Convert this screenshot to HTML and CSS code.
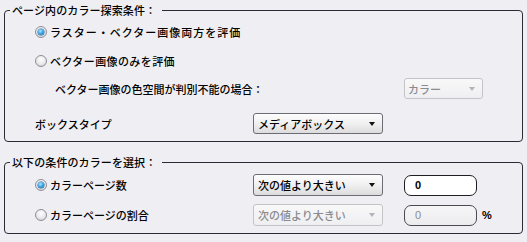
FILE: index.html
```html
<!DOCTYPE html>
<html lang="ja">
<head>
<meta charset="utf-8">
<link rel="stylesheet" href="styles.css">
</head>
<body>
<fieldset class="group group-top">
  <legend>ページ内のカラー探索条件：</legend>
  <div class="row row-1">
    <label class="opt"><span class="radio on"></span><span class="txt wide">ラスター・ベクター画像両方を評価</span></label>
  </div>
  <div class="row row-2">
    <label class="opt"><span class="radio"></span><span class="txt mid">ベクター画像のみを評価</span></label>
  </div>
  <div class="row row-3">
    <span class="txt indent span2">ベクター画像の色空間が判別不能の場合：</span>
    <div class="select small disabled"><span class="sel-text">カラー</span><span class="arrow"></span></div>
  </div>
  <div class="row row-4">
    <span class="txt">ボックスタイプ</span>
    <div class="select"><span class="sel-text">メディアボックス</span><span class="arrow"></span></div>
  </div>
</fieldset>
<fieldset class="group group-bottom">
  <legend>以下の条件のカラーを選択：</legend>
  <div class="row row-5">
    <label class="opt"><span class="radio on"></span><span class="txt">カラーページ数</span></label>
    <div class="select"><span class="sel-text">次の値より大きい</span><span class="arrow"></span></div>
    <div class="field"><span class="input">0</span></div>
  </div>
  <div class="row row-6">
    <label class="opt"><span class="radio"></span><span class="txt">カラーページの割合</span></label>
    <div class="select disabled"><span class="sel-text">次の値より大きい</span><span class="arrow"></span></div>
    <div class="field"><span class="input disabled">0</span><span class="pct">%</span></div>
  </div>
</fieldset>
</body>
</html>
```
FILE: styles.css
```css
html {
  background: #efeef3;
}
body {
  margin: 0;
  width: 527px;
  height: 242px;
  overflow: hidden;
  font-family: "Noto Sans CJK JP", "Noto Sans", sans-serif;
  font-size: 11px;
  font-weight: 500;
  color: #000;
  background: #efeef3;
}
.group {
  margin: 0 0 0 4px;
  width: 519px;
  box-sizing: border-box;
  border: 1px solid #2b2b38;
  border-radius: 4px;
  padding: 0 0 7px 30px;
  min-width: 0;
}
.group-bottom {
  margin-top: 10px;
}
legend {
  margin-left: -25px;
  padding: 0 6px 0 2px;
  line-height: 20px;
  height: 20px;
  font-size: 11px;
  letter-spacing: 0.1px;
}
.row {
  display: grid;
  grid-template-columns: 218px 151px auto;
  align-items: center;
}
.row-1 { height: 22px; margin-top: 1px; }
.row-2 { height: 22px; margin-top: 7px; }
.row-3 { height: 21px; margin-top: 6px; }
.row-4 { height: 21px; margin-top: 14px; }
.row-5 { height: 22px; margin-top: 2px; }
.row-6 { height: 22px; margin-top: 8px; }

.span2 { grid-column: 1 / 3; }
.row-3 .select { grid-column: 3; }
.opt {
  display: flex;
  align-items: center;
  gap: 3px;
}
.txt {
  white-space: nowrap;
  line-height: 16px;
}
.wide { letter-spacing: 1px; }
.mid { letter-spacing: 0.4px; }
.indent { padding-left: 20px; }
.radio {
  width: 10px;
  height: 10px;
  border-radius: 50%;
  border: 1px solid #8e8e94;
  background: radial-gradient(circle at 50% 35%, #ffffff 0%, #e9e9ec 55%, #c9c9ce 100%);
  display: flex;
  align-items: center;
  justify-content: center;
  flex: none;
}
.radio.on::after {
  content: "";
  width: 6px;
  height: 6px;
  border-radius: 50%;
  background: radial-gradient(circle at 40% 35%, #a8e6ff 0%, #2f9be0 55%, #0f5fa8 100%);
  box-shadow: 0 0 0 0.5px #1b5f98;
}
.select {
  width: 130px;
  height: 21px;
  box-sizing: border-box;
  border: 1px solid #6c6c74;
  border-radius: 3px;
  background: linear-gradient(#fdfdfd, #f0f0f0 50%, #dcdcde);
  display: flex;
  align-items: center;
  justify-content: space-between;
  padding: 0 7px 0 4px;
}
.row-5 .select, .row-6 .select { height: 22px; }
.select.small {
  width: 79px;
  padding-left: 3px;
}
.sel-text {
  white-space: nowrap;
  line-height: 16px;
}
.arrow {
  width: 0;
  height: 0;
  border-left: 3px solid transparent;
  border-right: 3px solid transparent;
  border-top: 4px solid #111;
}
.select.disabled {
  border-color: #c4c4c8;
  background: linear-gradient(#f8f8f9, #efeff1);
  color: #8a8a8f;
}
.select.disabled .arrow {
  border-top-color: #b4b4b8;
}
.field {
  display: flex;
  align-items: center;
  gap: 5px;
}
.input {
  width: 73px;
  height: 21px;
  box-sizing: border-box;
  border: 1px solid #1e1e24;
  border-radius: 7px;
  background: #fff;
  padding-left: 10px;
  font-family: "Liberation Sans", Arial, sans-serif;
  font-weight: bold;
  font-size: 11px;
  line-height: 19px;
}
.input.disabled {
  border-color: #4a4a52;
  background: linear-gradient(#f6f6f7, #ececee);
  color: #8a8a8f;
  font-weight: normal;
}
.pct {
  font-family: "Liberation Sans", Arial, sans-serif;
  font-weight: bold;
  font-size: 11px;
}
```
